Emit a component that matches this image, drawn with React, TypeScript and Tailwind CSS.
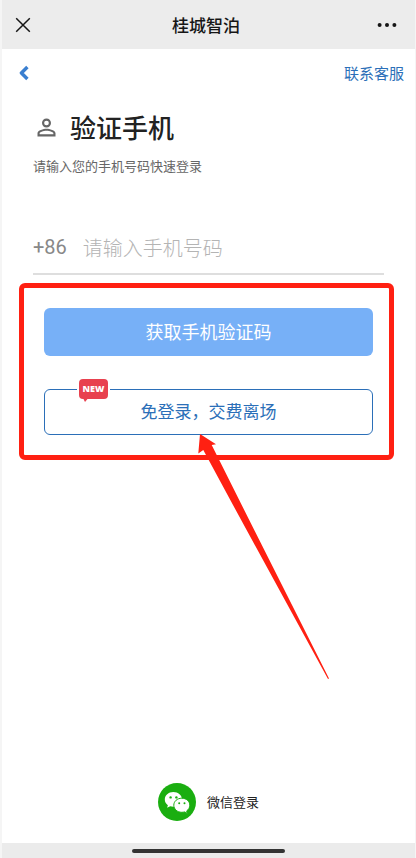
import React from "react";
import { MdPersonOutline } from "react-icons/md";

function CloseIcon() {
  return (
    <svg viewBox="0 0 16 16" className="size-4" fill="none" stroke="#161616" strokeWidth="1.5">
      <path d="M1.2 1.2 14.8 14.8M14.8 1.2 1.2 14.8" />
    </svg>
  );
}

function MoreIcon() {
  return (
    <svg viewBox="0 0 20 6" className="h-[6px] w-5" fill="#161616">
      <circle cx="2.6" cy="3" r="2" />
      <circle cx="10" cy="3" r="2" />
      <circle cx="17.4" cy="3" r="2" />
    </svg>
  );
}

function BackIcon() {
  return (
    <svg viewBox="0 0 10 16" className="h-4 w-[10px]" fill="none" stroke="#3a7fd0" strokeWidth="3.4">
      <path d="M8.400 2 2.400 8l6 6" strokeLinejoin="round" />
    </svg>
  );
}

function NewBadge() {
  return (
    <div className="absolute -top-[11px] left-[34px] h-[25px] w-[31px]">
      <svg viewBox="0 0 31 25" className="absolute inset-0 size-full overflow-visible">
        <path
          d="M5 1h21q4 0 4 4v12q0 4-4 4H9.5L7 24 5.500 21H5q-4 0-4-4V5q0-4 4-4Z"
          fill="#e8414f"
          stroke="#fff"
          strokeWidth="4"
          paintOrder="stroke"
        />
      </svg>
      <span className="relative block text-center font-['Open_Sans',sans-serif] text-[9px] leading-[22px] font-extrabold text-white">
        NEW
      </span>
    </div>
  );
}

function Arrow() {
  return (
    <svg viewBox="0 0 132 246" className="pointer-events-none absolute top-[45px] left-[154px] h-[246px] w-[132px]">
      <path d="M2 0 18 10.300 13.700 11 43.700 71 131 244.500 130 245 35 71 5.300 16 .3 19.500Z" fill="#ff2012" />
    </svg>
  );
}

function WechatIcon() {
  return (
    <svg viewBox="0 0 38 38" className="size-[38px]">
      <circle cx="19" cy="19" r="19" fill="#1aae10" />
      <path
        d="M15.300 9C10.500 9 6.800 12.300 6.800 16.500c0 2.400 1.200 4.400 3.100 5.700l-.8 2.600 3.100-1.600c1 .3 2 .5 3.100.5 4.900 0 8.700-3.200 8.700-7.300S20.200 9 15.300 9Z"
        fill="#fff"
      />
      <path
        d="M23.800 15.200c-4.500 0-8 3.100-8 7s3.500 7.100 8 7.100c1 0 1.900-.2 2.800-.4l2.700 1.500-.6-2.500c1.900-1.300 3.100-3.300 3.100-5.700 0-3.900-3.500-7-8-7Z"
        fill="#fff"
        stroke="#1aae10"
      />
      <g fill="#1aae10">
        <circle cx="12.600" cy="14.400" r="1.200" />
        <circle cx="18.400" cy="14.400" r="1.200" />
        <circle cx="21.200" cy="20.300" r="1" />
        <circle cx="26.500" cy="20.300" r="1" />
      </g>
    </svg>
  );
}

export default function App() {
  return (
    <div className="flex min-h-screen flex-col border-r border-l-2 border-[#f5f5f5] bg-white font-['Noto_Sans_CJK_SC',sans-serif]">
      <header className="grid h-[49px] grid-cols-3 items-center bg-[#ececec] pr-[18px] pl-[13px]">
        <button type="button" aria-label="关闭" className="justify-self-start">
          <CloseIcon />
        </button>
        <h1 className="justify-self-center text-[17px] leading-6 font-medium text-[#161616]">桂城智泊</h1>
        <button type="button" aria-label="更多" className="justify-self-end">
          <MoreIcon />
        </button>
      </header>

      <main className="flex grow flex-col">
        <nav className="flex h-12 items-center justify-between pr-[11px] pl-[17px]">
          <button type="button" aria-label="返回">
            <BackIcon />
          </button>
          <a href="#service" className="text-[15px] leading-6 text-[#2b6fb8]">联系客服</a>
        </nav>

        <div className="px-[31px] pt-3">
          <div className="flex items-center gap-[10px]">
            <MdPersonOutline className="size-[27px] text-[#666]" />
            <h2 className="text-[26px] leading-9 font-medium text-[#222]">验证手机</h2>
          </div>
          <p className="mt-[11px] text-[13px] leading-5 text-[#666]">请输入您的手机号码快速登录</p>
        </div>

        <div className="mx-[31px] mt-[45px] flex h-[54px] items-center gap-4 border-b-2 border-[#dedede]">
          <label htmlFor="phone" className="font-[Roboto,sans-serif] text-[20px] leading-6 text-[#888]">+86</label>
          <input
            id="phone"
            type="tel"
            placeholder="请输入手机号码"
            className="h-9 min-w-0 grow text-[20px] font-light text-[#333] outline-none placeholder:text-[#b4b4b4]"
          />
        </div>

        <section className="mt-2 mr-[21px] ml-[17px] flex flex-col gap-[33px] rounded-md border-5 border-[#ff2012] py-5 pr-4 pl-5">
          <button type="button" className="h-12 rounded-md bg-[#77b0f7] pb-[2px] text-[18px] text-white">
            获取手机验证码
          </button>
          <div className="relative">
            <button type="button" className="h-[46px] w-full rounded-md border border-[#2b6fb8] pb-[2px] text-[17px] text-[#2b6fb8]">
              免登录，交费离场
            </button>
            <NewBadge />
            <Arrow />
          </div>
        </section>

        <button type="button" className="mt-auto mb-[22px] flex items-center gap-[11px] self-center text-[13px] text-[#222]">
          <WechatIcon />
          微信登录
        </button>
      </main>

      <footer className="flex h-[15px] items-center justify-center bg-[#ebebeb]">
        <div className="h-1 w-[153px] rounded-full bg-[#333]" />
      </footer>
    </div>
  );
}
